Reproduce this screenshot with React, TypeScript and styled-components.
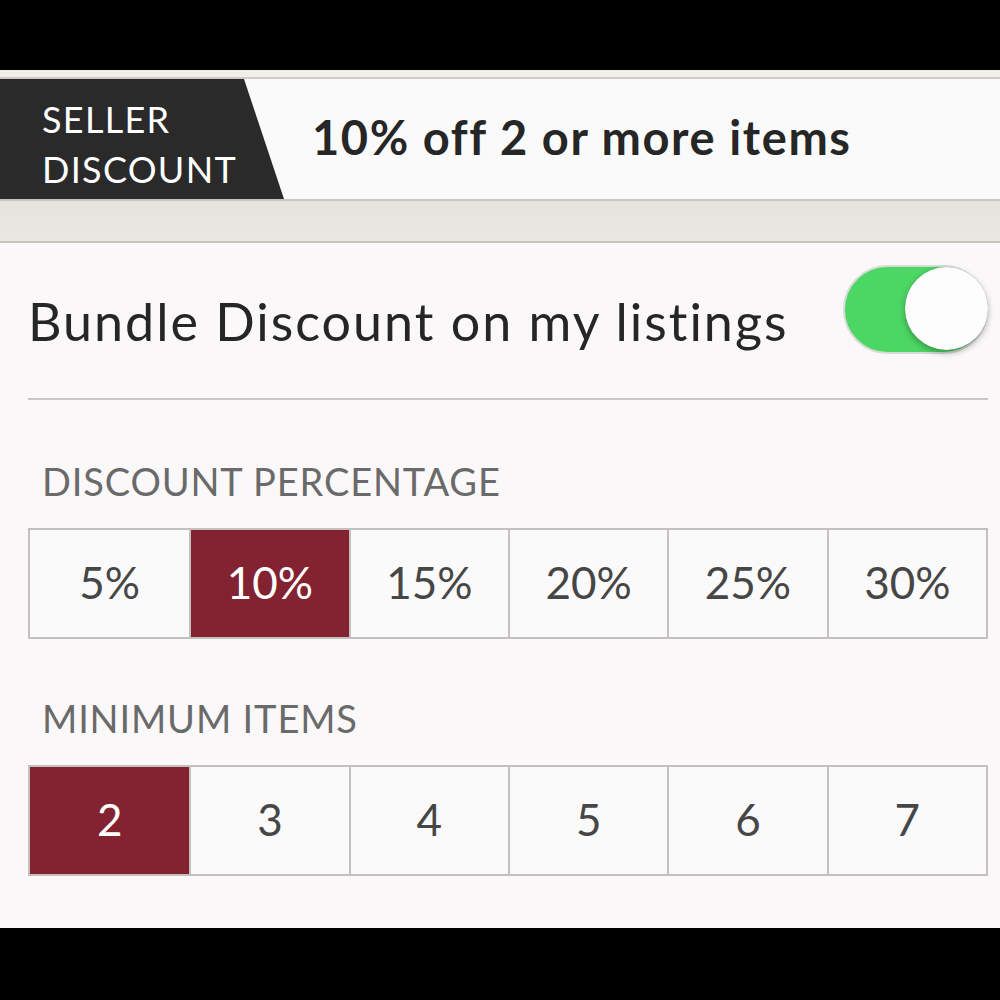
import styled, { createGlobalStyle } from 'styled-components';

const GlobalStyle = createGlobalStyle`
  html, body {
    margin: 0;
    padding: 0;
    background: #000;
  }
  body {
    font-family: Lato, 'Open Sans', sans-serif;
  }
`;

const Screen = styled.div`
  width: 1000px;
  height: 1000px;
  display: flex;
  flex-direction: column;
  background: #000;
`;

const TopBlack = styled.div`
  height: 70px;
  flex-shrink: 0;
`;

const TopStrip = styled.div`
  height: 7px;
  background: #f2efeb;
  border-bottom: 2px solid #cfccc8;
`;

const Header = styled.div`
  height: 120px;
  display: flex;
  align-items: stretch;
  background: #fbfafa;
  border-bottom: 2px solid #c9c6c1;
`;

const Tag = styled.div`
  width: 284px;
  background: #2a2a2a;
  clip-path: polygon(0 0, 244px 0, 284px 100%, 0 100%);
  color: #fff;
  font-size: 36px;
  line-height: 50px;
  padding: 15px 0 0 42px;
  box-sizing: border-box;
  letter-spacing: 1.3px;
`;

const Headline = styled.div`
  display: flex;
  align-items: center;
  padding-left: 28px;
  font-size: 47px;
  font-weight: 700;
  color: #262626;
  letter-spacing: 1.6px;
  padding-bottom: 4px;
`;

const Band = styled.div`
  height: 40px;
  background: linear-gradient(180deg, #e6e3de 0%, #ebe8e3 100%);
  border-bottom: 2px solid #c6c3be;
`;

const Main = styled.div`
  flex: 1;
  background: #faf8f8;
  padding: 0 12px 0 28px;
  display: flex;
  flex-direction: column;
`;

const BundleRow = styled.div`
  height: 155px;
  display: flex;
  align-items: center;
  justify-content: space-between;
  border-bottom: 2px solid #cac7c4;
`;

const BundleText = styled.div`
  font-size: 52px;
  color: #262626;
  letter-spacing: 2px;
`;

const Toggle = styled.div<{ $on: boolean }>`
  position: relative;
  width: 145px;
  height: 89px;
  border-radius: 45px;
  box-sizing: border-box;
  border: 2px solid #d7dbd6;
  background: ${(p) => (p.$on ? '#4cd663' : '#fff')};
  margin-bottom: 22px;
`;

const Knob = styled.div<{ $on: boolean }>`
  position: absolute;
  top: 0;
  ${(p) => (p.$on ? 'right: -2px;' : 'left: 0;')}
  width: 83px;
  height: 83px;
  border-radius: 50%;
  background: #fdfdfd;
  box-shadow: 0 3px 6px rgba(0, 0, 0, 0.3), 0 0 1px rgba(0, 0, 0, 0.2);
`;

const Label = styled.div<{ $top: number }>`
  padding: ${(p) => p.$top}px 0 0 14px;
  font-size: 38px;
  line-height: 38px;
  color: #6a6a6a;
  letter-spacing: 0.85px;
`;

const Segments = styled.div<{ $top: number }>`
  margin-top: ${(p) => p.$top}px;
  display: grid;
  grid-template-columns: repeat(6, 1fr);
  border: 2px solid #c3c0be;
  height: 107px;
`;

const Segment = styled.div<{ $active?: boolean }>`
  display: flex;
  align-items: center;
  justify-content: center;
  font-size: 44px;
  color: ${(p) => (p.$active ? '#fff' : '#464646')};
  background: ${(p) => (p.$active ? '#832331' : '#fbfafa')};
  border-left: 2px solid #c3c0be;
  padding-bottom: 4px;
  &:first-child {
    border-left: none;
  }
`;

const BottomBlack = styled.div`
  height: 72px;
  flex-shrink: 0;
`;

const percents = ['5%', '10%', '15%', '20%', '25%', '30%'];
const items = ['2', '3', '4', '5', '6', '7'];

const App = () => {
  return (
    <Screen>
      <GlobalStyle />
      <TopBlack />
      <TopStrip />
      <Header>
        <Tag>
          SELLER
          <br />
          DISCOUNT
        </Tag>
        <Headline>10% off 2 or more items</Headline>
      </Header>
      <Band />
      <Main>
        <BundleRow>
          <BundleText>Bundle Discount on my listings</BundleText>
          <Toggle $on>
            <Knob $on />
          </Toggle>
        </BundleRow>
        <Label $top={62}>DISCOUNT PERCENTAGE</Label>
        <Segments $top={28}>
          {percents.map((p) => (
            <Segment key={p} $active={p === '10%'}>
              {p}
            </Segment>
          ))}
        </Segments>
        <Label $top={60}>MINIMUM ITEMS</Label>
        <Segments $top={28}>
          {items.map((n) => (
            <Segment key={n} $active={n === '2'}>
              {n}
            </Segment>
          ))}
        </Segments>
      </Main>
      <BottomBlack />
    </Screen>
  );
};

export default App;
